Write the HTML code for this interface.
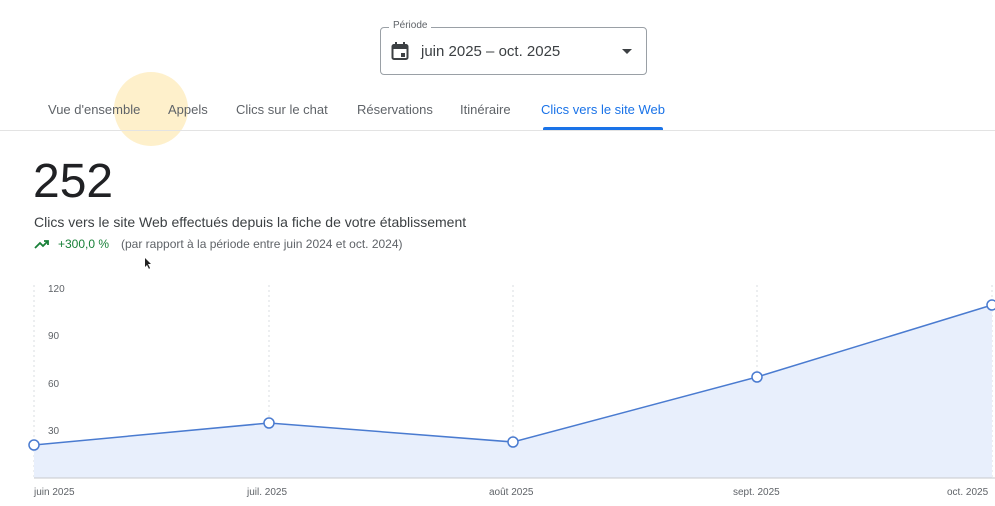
<!DOCTYPE html>
<html><head><meta charset="utf-8"><style>
body{margin:0;width:995px;height:506px;background:#fff;font-family:"Liberation Sans",Arial,sans-serif;position:relative;overflow:hidden}
.a{position:absolute;white-space:nowrap}
</style></head><body>
<div class="a" style="left:114px;top:72px;width:74px;height:74px;border-radius:50%;background:rgba(253,228,160,0.55)"></div>
<div class="a" style="left:380px;top:27px;width:267px;height:48px;border:1px solid #9aa0a6;border-radius:4px;box-sizing:border-box"></div>
<div class="a" style="left:389px;top:20px;background:#fff;padding:0 4px;font-size:10px;color:#5f6368">Période</div>
<svg class="a" style="left:391px;top:41px" width="18" height="20" viewBox="0 0 18 20"><rect x="1.5" y="4" width="15" height="14" rx="1.5" fill="none" stroke="#3c4043" stroke-width="2"/><rect x="1.5" y="4" width="15" height="4" fill="#3c4043"/><rect x="4" y="1" width="2" height="4" fill="#3c4043"/><rect x="12" y="1" width="2" height="4" fill="#3c4043"/><rect x="10" y="12" width="4" height="4" fill="#3c4043"/></svg>
<div class="a" style="left:421px;top:43px;font-size:15px;color:#3c4043">juin 2025 – oct. 2025</div>
<div class="a" style="left:622px;top:49px;width:0;height:0;border-left:5px solid transparent;border-right:5px solid transparent;border-top:5px solid #3c4043"></div>
<div class="a" style="top:102px;left:48px;font-size:13px;color:#5f6368">Vue d'ensemble</div>
<div class="a" style="top:102px;left:168px;font-size:13px;color:#5f6368">Appels</div>
<div class="a" style="top:102px;left:236px;font-size:13px;color:#5f6368">Clics sur le chat</div>
<div class="a" style="top:102px;left:357px;font-size:13px;color:#5f6368">Réservations</div>
<div class="a" style="top:102px;left:460px;font-size:13px;color:#5f6368">Itinéraire</div>
<div class="a" style="top:102px;left:541px;font-size:13px;color:#1a73e8">Clics vers le site Web</div>
<div class="a" style="left:543px;top:127px;width:120px;height:3px;background:#1a73e8;border-radius:2px 2px 0 0"></div>
<div class="a" style="left:0;top:130px;width:995px;height:1px;background:#e3e3e3"></div>
<div class="a" style="left:33px;top:154px;font-size:48px;color:#202124">252</div>
<div class="a" style="left:34px;top:214px;font-size:14px;color:#3c4043">Clics vers le site Web effectués depuis la fiche de votre établissement</div>
<svg class="a" style="left:34px;top:238px" width="16" height="12" viewBox="0 0 16 12"><path d="M1 10 L6 5 L9 8 L14 3 M10 3 H14 V7" fill="none" stroke="#188038" stroke-width="1.8"/></svg>
<div class="a" style="left:58px;top:237px;font-size:12px;color:#188038">+300,0 %</div>
<div class="a" style="left:121px;top:237px;font-size:12px;color:#5f6368">(par rapport à la période entre juin 2024 et oct. 2024)</div>
<svg class="a" style="left:0;top:0" width="995" height="506">
<g stroke="#dadce0" stroke-dasharray="2,3"><line x1="34" y1="285" x2="34" y2="478"/><line x1="269" y1="285" x2="269" y2="478"/><line x1="513" y1="285" x2="513" y2="478"/><line x1="757" y1="285" x2="757" y2="478"/><line x1="992" y1="285" x2="992" y2="478"/></g>
<path d="M34 445 L269 423 L513 442 L757 377 L992 305 L992 478 L34 478Z" fill="#e8effc"/>
<line x1="34" y1="478" x2="995" y2="478" stroke="#c7c9cc"/>
<path d="M34 445 L269 423 L513 442 L757 377 L992 305" fill="none" stroke="#4a7bd0" stroke-width="1.5"/>
<g fill="#fff" stroke="#4a7bd0" stroke-width="1.5"><circle cx="34" cy="445" r="5"/><circle cx="269" cy="423" r="5"/><circle cx="513" cy="442" r="5"/><circle cx="757" cy="377" r="5"/><circle cx="992" cy="305" r="5"/></g>
<g font-size="10" fill="#5f6368" font-family="Liberation Sans"><text x="48" y="292">120</text><text x="48" y="339">90</text><text x="48" y="387">60</text><text x="48" y="434">30</text>
<text x="34" y="495">juin 2025</text><text x="247" y="495">juil. 2025</text><text x="489" y="495">août 2025</text><text x="733" y="495">sept. 2025</text><text x="947" y="495">oct. 2025</text></g>
<path d="M145 258 L145 267 L147 265 L149 269 L150 268 L148 264 L151 264Z" fill="#222"/>
</svg>
</body></html>
